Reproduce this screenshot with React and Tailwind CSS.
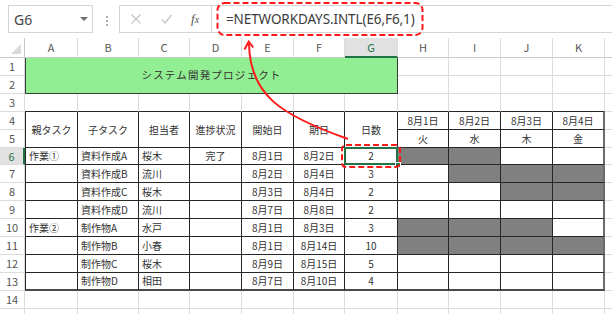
import React from 'react'

const COLS = ['A', 'B', 'C', 'D', 'E', 'F', 'G', 'H', 'I', 'J', 'K']
const HEADS = ['親タスク', '子タスク', '担当者', '進捗状況', '開始日', '期日', '日数']
const DATES = ['8月1日', '8月2日', '8月3日', '8月4日']
const DAYS = ['火', '水', '木', '金']

// parent, child, owner, status, start, due, days, gantt H..K
const ROWS = [
  ['作業①', '資料作成A', '桜木', '完了', '8月1日', '8月2日', '2', [1, 1, 0, 0]],
  ['', '資料作成B', '流川', '', '8月2日', '8月4日', '3', [0, 1, 1, 1]],
  ['', '資料作成C', '桜木', '', '8月3日', '8月4日', '2', [0, 0, 1, 1]],
  ['', '資料作成D', '流川', '', '8月7日', '8月8日', '2', [0, 0, 0, 0]],
  ['作業②', '制作物A', '水戸', '', '8月1日', '8月3日', '3', [1, 1, 1, 0]],
  ['', '制作物B', '小春', '', '8月1日', '8月14日', '10', [1, 1, 1, 1]],
  ['', '制作物C', '桜木', '', '8月9日', '8月15日', '5', [0, 0, 0, 0]],
  ['', '制作物D', '相田', '', '8月7日', '8月10日', '4', [0, 0, 0, 0]],
]

const light = 'border-r border-b border-[#dcdcdc]'
const dark = 'border-r border-b border-[#262626]'

const RowHead = ({ n, active }) => (
  <div
    className={
      active
        ? 'flex items-center justify-center border-b border-[#dcdcdc] border-r-2 border-r-[#217346] bg-[#e1e1e1] text-[11px] text-[#217346]'
        : 'flex items-center justify-center border-b border-r border-[#dcdcdc] text-[11px] text-[#555]'
    }
  >
    {n}
  </div>
)

const Toolbar = () => (
  <div className="flex h-[38px] items-start pt-[5px]">
    {/* name box */}
    <div className="ml-[8px] flex h-[28px] w-[85px] items-center justify-between border border-[#d4d4d4] pl-[5px] pr-[4px]">
      <span className="text-[14px] text-[#444]">G6</span>
      <span className="h-0 w-0 border-x-[4px] border-t-[4px] border-x-transparent border-t-[#707070]" />
    </div>
    <div className="ml-[13px] mt-[11px] flex flex-col gap-[2px]">
      <span className="h-[2px] w-[2px] bg-[#b0b0b0]" />
      <span className="h-[2px] w-[2px] bg-[#b0b0b0]" />
      <span className="h-[2px] w-[2px] bg-[#b0b0b0]" />
    </div>
    <div className="ml-[11px] flex h-[28px] w-[93px] items-center border border-[#d4d4d4]">
      <svg width="12" height="12" viewBox="0 0 12 12" className="ml-[10px]">
        <path d="M1.5 1.5 L10.5 10.5 M10.5 1.5 L1.5 10.5" stroke="#c6c6c6" strokeWidth="1.3" fill="none" />
      </svg>
      <svg width="13" height="12" viewBox="0 0 13 12" className="ml-[18px]">
        <path d="M1.5 6.5 L5 10 L11.5 2" stroke="#c6c6c6" strokeWidth="1.4" fill="none" />
      </svg>
      <span className="ml-[18px] font-['Liberation_Serif',serif] text-[13px] italic text-[#555]">
        f<span className="text-[10px]">x</span>
      </span>
    </div>
    <div className="flex h-[28px] flex-1 items-center border-y border-[#d4d4d4] pl-[14px]">
      <span className="text-[13.5px] tracking-[-0.1px] text-[#3c3c3c]">=NETWORKDAYS.INTL(E6,F6,1)</span>
    </div>
  </div>
)

const Sheet = () => {
  const cells = []

  // column header row
  cells.push(
    <div key="corner" className="relative border-b border-r border-[#c8c8c8]">
      <span className="absolute bottom-[3px] right-[3px] h-0 w-0 border-l-[10px] border-t-[10px] border-l-transparent border-t-transparent border-b-[10px] border-b-[#d9d9d9] border-r-0" />
    </div>
  )
  COLS.forEach((c) => {
    cells.push(
      <div
        key={'h' + c}
        className={
          c === 'G'
            ? 'flex items-center justify-center border-r border-[#dcdcdc] border-b-2 border-b-[#217346] bg-[#e1e1e1] text-[11px] text-[#217346]'
            : 'flex items-center justify-center border-r border-b border-r-[#dcdcdc] border-b-[#c8c8c8] text-[11px] text-[#555]'
        }
      >
        {c}
      </div>
    )
  })
  cells.push(<div key="hL" className="border-b border-[#c8c8c8]" />)

  // rows 1-2 with banner
  cells.push(<RowHead key="r1" n={1} />)
  cells.push(
    <div
      key="banner"
      className="col-span-7 row-span-2 flex items-center justify-center border-x border-b border-[#3a3a3a] bg-[#92ee92] text-[10.5px] tracking-[1.2px] text-[#333]"
    >
      システム開発プロジェクト
    </div>
  )
  for (let r = 1; r <= 2; r++) {
    if (r === 2) cells.push(<RowHead key="r2" n={2} />)
    ;['H', 'I', 'J', 'K'].forEach((c) => cells.push(<div key={r + c} className={light} />))
    cells.push(<div key={r + 'L'} className="border-b border-[#dcdcdc]" />)
  }

  // row 3 (top edge of the table)
  cells.push(<RowHead key="r3" n={3} />)
  COLS.forEach((c) =>
    cells.push(<div key={'3' + c} className="border-b border-r border-r-[#dcdcdc] border-b-[#262626]" />)
  )
  cells.push(<div key="3L" className="border-b border-[#dcdcdc]" />)

  // rows 4-5 header
  cells.push(<RowHead key="r4" n={4} />)
  HEADS.forEach((h, i) =>
    cells.push(
      <div
        key={'hd' + i}
        className={`row-span-2 flex items-center justify-center ${dark} ${i === 0 ? 'border-l' : ''}`}
      >
        {h}
      </div>
    )
  )
  DATES.forEach((d, i) =>
    cells.push(
      <div
        key={'d' + i}
        className={`flex items-center justify-center ${dark} ${i === 3 ? 'border-r-2 border-r-[#6b6b6b]' : ''}`}
      >
        {d}
      </div>
    )
  )
  cells.push(<div key="4L" className="border-b border-[#dcdcdc]" />)
  cells.push(<RowHead key="r5" n={5} />)
  DAYS.forEach((d, i) =>
    cells.push(
      <div
        key={'w' + i}
        className={`flex items-center justify-center ${dark} ${i === 3 ? 'border-r-2 border-r-[#6b6b6b]' : ''}`}
      >
        {d}
      </div>
    )
  )
  cells.push(<div key="5L" className="border-b border-[#dcdcdc]" />)

  // data rows 6-13
  ROWS.forEach((row, ri) => {
    const n = ri + 6
    const last = ri === ROWS.length - 1
    const bottom = last ? 'border-b-2 border-b-[#4a4a4a]' : ''
    cells.push(<RowHead key={'r' + n} n={n} active={n === 6} />)
    const [parent, child, owner, status, start, due, days, gantt] = row
    cells.push(
      <div key={n + 'A'} className={`flex items-center border-l pl-[3px] ${dark} ${bottom}`}>
        {parent}
      </div>
    )
    cells.push(
      <div key={n + 'B'} className={`flex items-center pl-[3px] ${dark} ${bottom}`}>
        {child}
      </div>
    )
    cells.push(
      <div key={n + 'C'} className={`flex items-center pl-[3px] ${dark} ${bottom}`}>
        {owner}
      </div>
    )
    ;[status, start, due].forEach((v, i) =>
      cells.push(
        <div key={n + 'DEF'[i]} className={`flex items-center justify-center ${dark} ${bottom}`}>
          {v}
        </div>
      )
    )
    cells.push(
      <div key={n + 'G'} className={`relative flex items-center justify-center ${dark} ${bottom}`}>
        {days}
        {n === 6 && (
          <>
            <span className="absolute inset-[-1px] border-2 border-[#217346]" />
            <span className="absolute bottom-[-4px] right-[-4px] h-[6px] w-[6px] border border-white bg-[#217346]" />
          </>
        )}
      </div>
    )
    gantt.forEach((g, i) =>
      cells.push(
        <div
          key={n + 'HIJK'[i]}
          className={`${dark} ${bottom} ${g ? 'bg-[#808080]' : ''} ${i === 3 ? 'border-r-2 border-r-[#6b6b6b]' : ''}`}
        />
      )
    )
    cells.push(<div key={n + 'L'} className="border-b border-[#dcdcdc]" />)
  })

  // row 14 and the top sliver of row 15
  for (let n = 14; n <= 15; n++) {
    cells.push(<RowHead key={'r' + n} n={n === 14 ? n : ''} />)
    COLS.forEach((c) => cells.push(<div key={n + c} className={light} />))
    cells.push(<div key={n + 'L'} className="border-b border-[#dcdcdc]" />)
  }

  return (
    <div className="grid grid-cols-[25px_53px_61px_51px_52px_52px_51px_53px_51px_52px_52px_52px_7px] grid-rows-[20px_18px_18px_18px_18px_18px_17px_18px_18px_18px_18px_18px_18px_18px_18px_18px] text-[10px] leading-none text-[#333]">
      {cells}
    </div>
  )
}

const Annotations = () => (
  <svg className="pointer-events-none absolute left-0 top-0" width="612" height="314" viewBox="0 0 612 314">
    <rect x="217.5" y="3" width="205" height="32" rx="7" fill="none" stroke="#ff1a1a" strokeWidth="2" strokeDasharray="6 3" />
    <rect x="342" y="145" width="58" height="22" rx="4" fill="none" stroke="#ff1a1a" strokeWidth="2" strokeDasharray="6 3" />
    <path d="M348 139 C280 115 250 95 249 44" fill="none" stroke="#ff1a1a" strokeWidth="2" />
    <polyline points="244.5,49.5 248.7,41.5 253.2,47.5" fill="none" stroke="#ff1a1a" strokeWidth="2" />
  </svg>
)

export default function App() {
  return (
    <div className="relative h-[314px] w-[612px] overflow-hidden bg-white font-['Noto_Sans','Noto_Sans_CJK_JP',sans-serif]">
      <Toolbar />
      <div className="font-['Noto_Sans_CJK_JP','Noto_Sans',sans-serif]">
        <Sheet />
      </div>
      <Annotations />
    </div>
  )
}
